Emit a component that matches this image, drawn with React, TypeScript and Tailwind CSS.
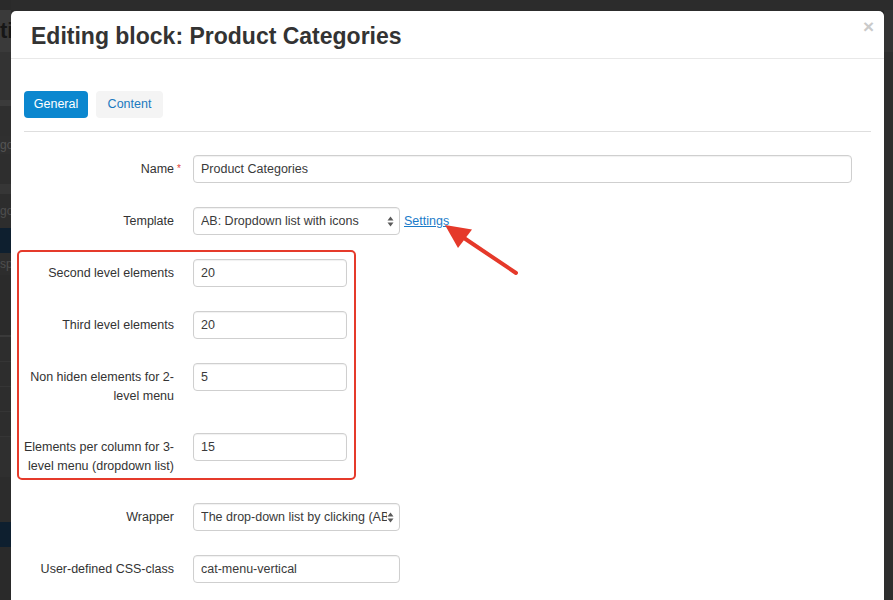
import React from 'react';

type Field = {
  label: React.ReactNode;
  value: string;
  width: string;
  select?: boolean;
  required?: boolean;
  tall?: boolean;
  link?: string;
};

const fields: Field[] = [
  { label: 'Name', value: 'Product Categories', width: 'w-[659px]', required: true },
  { label: 'Template', value: 'AB: Dropdown list with icons', width: 'w-[207px]', select: true, link: 'Settings' },
  { label: 'Second level elements', value: '20', width: 'w-[154px]' },
  { label: 'Third level elements', value: '20', width: 'w-[154px]' },
  {
    label: (
      <>
        Non hiden elements for 2-
        <br />
        level menu
      </>
    ),
    value: '5',
    width: 'w-[154px]',
    tall: true,
  },
  {
    label: (
      <>
        Elements per column for 3-
        <br />
        level menu (dropdown list)
      </>
    ),
    value: '15',
    width: 'w-[154px]',
    tall: true,
  },
  { label: 'Wrapper', value: 'The drop-down list by clicking (AB: Dropdown)', width: 'w-[207px]', select: true },
  { label: 'User-defined CSS-class', value: 'cat-menu-vertical', width: 'w-[207px]' },
];

function SelectArrows() {
  return (
    <svg width="7" height="11" viewBox="0 0 7 11" className="shrink-0">
      <path d="M3.5 0.5 L6.5 4.6 L0.5 4.6 Z" fill="#5a5a5a" />
      <path d="M3.5 10.5 L6.5 6.4 L0.5 6.4 Z" fill="#5a5a5a" />
    </svg>
  );
}

function FormRow({ field }: { field: Field }) {
  return (
    <div className={`flex items-start ${field.tall ? 'min-h-[46px]' : ''}`}>
      <div className="-ml-[14px] w-[164px] shrink-0 text-right whitespace-nowrap pt-[5px] leading-[19px] text-[12.5px] text-[#333]">
        <span className="relative">
          {field.label}
          {field.required && (
            <span className="absolute -right-[7px] -top-[3px] text-[10px] text-[#e0433b]">*</span>
          )}
        </span>
      </div>
      <div className="ml-[19px] flex items-center">
        <div
          className={`${field.width} h-[28px] border border-[#cfcfcf] rounded-[4px] bg-white pl-[7px] pr-[5px] flex items-center text-[12.5px] text-[#3a3a3a] shadow-[inset_0_1px_1px_rgba(0,0,0,0.06)]`}
        >
          <span className="flex-1 min-w-0 overflow-hidden whitespace-nowrap">{field.value}</span>
          {field.select && <SelectArrows />}
        </div>
        {field.link && (
          <a className="ml-[4px] text-[12.5px] text-[#1a7bc9] underline underline-offset-[1px]">{field.link}</a>
        )}
      </div>
    </div>
  );
}

function Backdrop() {
  return (
    <div className="w-[11px] shrink-0 flex flex-col overflow-hidden">
      <div className="h-[10px] bg-[#2a2a2a]"></div>
      <div className="h-[42px] bg-[#3a3a3a] flex items-center text-[22px] font-bold text-[#161616] leading-none whitespace-nowrap">
        ti
      </div>
      <div className="h-[48px] bg-[#333]"></div>
      <div className="h-[6px] bg-[#3b3b3b]"></div>
      <div className="h-[30px] bg-[#2f2f2f]"></div>
      <div className="h-[18px] bg-[#303030] text-[12px] text-[#555] leading-[18px] whitespace-nowrap">go</div>
      <div className="h-[30px] bg-[#2e2e2e]"></div>
      <div className="h-[10px] bg-[#363636]"></div>
      <div className="h-[34px] bg-[#2d2d2d] text-[12px] text-[#4f4f4f] leading-[34px] whitespace-nowrap">go</div>
      <div className="h-[25px] bg-[#0e1f2f]"></div>
      <div className="h-[22px] bg-[#2d2d2d] text-[12px] text-[#4f4f4f] leading-[22px] whitespace-nowrap">sp</div>
      <div className="h-[60px] bg-[#2b2b2b]"></div>
      <div className="h-[2px] bg-[#3a3a3a]"></div>
      <div className="h-[25px] bg-[#2d2d2d] border-b border-[#353535]"></div>
      <div className="h-[25px] bg-[#2d2d2d] border-b border-[#353535]"></div>
      <div className="h-[25px] bg-[#2d2d2d] border-b border-[#353535]"></div>
      <div className="h-[25px] bg-[#2d2d2d] border-b border-[#353535]"></div>
      <div className="h-[40px] bg-[#2f2f2f]"></div>
      <div className="h-[45px] bg-[#2c2c2c]"></div>
      <div className="h-[25px] bg-[#0e1f2f]"></div>
      <div className="flex-1 bg-[#2a2a2a]"></div>
    </div>
  );
}

export default function App() {
  return (
    <div className="relative w-[893px] h-[600px] overflow-hidden bg-[#2c2c2c] flex font-['Liberation_Sans',Arial,sans-serif]">
      <Backdrop />

      {/* Modal */}
      <div className="mt-[11px] w-[873px] shrink-0 bg-white rounded-t-[5px] shadow-[1px_0_0_#111]">
        {/* Header */}
        <div className="h-[48px] border-b border-[#e8e8e8] flex items-start pl-[20px] pr-[10px]">
          <h1 className="flex-1 pt-[11px] text-[23px] font-bold text-[#333] leading-[28px]">
            Editing block: Product Categories
          </h1>
          <span className="mt-[6px] text-[19px] font-bold text-[#cacaca] leading-none">×</span>
        </div>

        {/* Body */}
        <div className="px-[13px] pt-[32px]">
          <div className="flex">
            <div className="w-[64px] h-[27px] rounded-[4px] bg-[#0b87cf] text-white text-[12.5px] flex items-center justify-center">
              General
            </div>
            <div className="ml-[8px] w-[67px] h-[27px] rounded-[4px] bg-[#f4f4f4] text-[#1b7ac0] text-[12.5px] flex items-center justify-center">
              Content
            </div>
          </div>
          <div className="mt-[13px] border-t border-[#dedede]"></div>

          <div className="relative pt-[23px] flex flex-col gap-[24px]">
            {fields.map((field, index) => (
              <FormRow key={index} field={field} />
            ))}
            {/* Annotation box */}
            <div className="absolute left-[-7px] top-[118px] w-[339px] h-[230px] border-2 border-[#e53a2b] rounded-[5px] pointer-events-none"></div>
          </div>
        </div>
      </div>

      <div className="flex-1 flex flex-col">
        <div className="h-[10px] bg-[#2c2c2c]"></div>
        <div className="h-[42px] bg-[#333]"></div>
        <div className="flex-1 bg-[#2e2e2e]"></div>
      </div>

      {/* Annotation arrow */}
      <svg
        className="absolute left-[440px] top-[218px] pointer-events-none"
        width="85"
        height="62"
        viewBox="440 218 85 62"
      >
        <line x1="464" y1="238" x2="516" y2="273" stroke="#e5392a" strokeWidth="4" strokeLinecap="round" />
        <path d="M445 225 L472 229.5 L458 248 Z" fill="#e5392a" />
      </svg>
    </div>
  );
}
